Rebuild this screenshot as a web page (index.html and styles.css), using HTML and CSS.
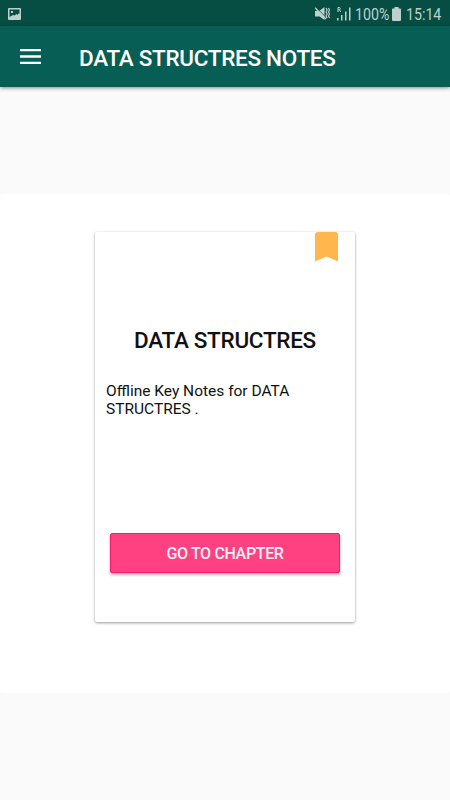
FILE: index.html
```html
<!DOCTYPE html>
<html lang="en">
<head>
    <meta charset="UTF-8">
    <meta name="viewport" content="width=device-width, initial-scale=1.0">
    <title>Data Structres Notes</title>
    <link rel="stylesheet" href="styles.css">
</head>
<body>
    <div class="status">
        <svg class="photo" width="13" height="12" viewBox="0 0 13 12">
            <rect width="13" height="12" rx="1" fill="#bdd0cd"/>
            <path d="M1.500 1.500h10v4.500l-1-.5-1 1.500-1-1-2 1.500-1.500-.5-3.500 2z" fill="#064d43"/>
            <rect x="3" y="3" width="2" height="2" fill="#bdd0cd"/>
        </svg>
        <svg class="mute" width="15" height="14" viewBox="0 0 15 14" fill="#bdd0cd">
            <path d="M0 4h4l5.500-4v13L4.500 9.500H0z"/>
            <path d="M1 .5L12 11.500" stroke="#064d43" stroke-width="1"/>
            <path d="M0 .8L11 12" stroke="#bdd0cd" stroke-width="1.400"/>
            <path d="M11 1l1.200 2-1.200 2 1.200 2-1.200 2 1.200 2M13.500 1l1 2-1 2 1 2-1 2 1 2" fill="none" stroke="#bdd0cd" stroke-width="1.200"/>
        </svg>
        <svg class="signal" width="14" height="14" viewBox="0 0 14 14" fill="#bdd0cd">
            <path d="M1 5V.5h1.700q1.300 1.200 0 2.300H1M2.300 2.800L3.800 5" fill="none" stroke="#bdd0cd"/>
            <path d="M0 11h1.500v2.500H0zM4 8h1.500v5.500H4zM8 4.500h1.500v9H8zM12 .5h1.500v13H12z"/>
        </svg>
        <span class="percent">100%</span>
        <svg class="battery" width="9" height="14" viewBox="0 0 9 14">
            <path d="M2.500 0h4v1.500H8q1 0 1 1V13q0 1-1 1H1q-1 0-1-1V2.500q0-1 1-1h1.500z" fill="#bdd0cd"/>
        </svg>
        <span class="time">15:14</span>
    </div>
    <header>
        <svg class="menu" width="21" height="15" viewBox="0 0 21 15">
            <path d="M0 1.200h21M0 7.500h21M0 13.800h21" stroke="#fff" stroke-width="2.300"/>
        </svg>
        <h1>DATA STRUCTRES NOTES</h1>
    </header>
    <main>
        <div class="card">
            <svg class="bookmark" width="23" height="30" viewBox="0 0 23 30">
                <path d="M3 0h17q3 0 3 3v26.500L11.500 24.500 0 29.500V3q0-3 3-3z" fill="#ffb74d"/>
            </svg>
            <h2>DATA STRUCTRES</h2>
            <p>Offline Key Notes for DATA STRUCTRES .</p>
            <button type="button">GO TO CHAPTER</button>
        </div>
    </main>
</body>
</html>
```
FILE: styles.css
```css
*{
    box-sizing: border-box;
}
body{
    margin: 0;
    height: 800px;
    overflow: hidden;
    background: #fafafa;
    font-family: Roboto, sans-serif;
}
.status{
    display: flex;
    align-items: center;
    height: 26px;
    padding: 2px 9px 0 8px;
    background: #064d43;
    color: #bdd0cd;
    font-size: 16.500px;
}
.photo{
    margin-right: auto;
}
.mute{
    margin-right: 7px;
}
.signal{
    margin-right: 4px;
}
/* narrow digits, like the phone's clock */
.percent, .time{
    white-space: nowrap;
    transform: scaleX(0.86);
    transform-origin: left;
}
.percent{
    width: 34px;
}
.battery{
    margin: 0 5px 0 3px;
}
.time{
    width: 35px;
}
header{
    display: flex;
    align-items: center;
    height: 61px;
    padding: 0 20px;
    background: #075e54;
    box-shadow: 0 1px 4px rgba(0, 0, 0, 0.45);
}
h1{
    margin: 2px 0 0 38px;
    color: white;
    font-size: 22.500px;
    font-weight: 500;
    letter-spacing: -0.3px;
    white-space: nowrap;
}
main{
    height: 499px;
    margin-top: 107px;
    padding: 38px 95px;
    border-radius: 3px;
    background: white;
}
.card{
    display: flex;
    flex-direction: column;
    height: 390px;
    padding: 0 15px;
    border-radius: 2px;
    background: white;
    box-shadow: 0 1px 3px rgba(0, 0, 0, 0.4);
}
.bookmark{
    align-self: flex-end;
    margin-right: 2px;
}
h2{
    margin: 65px 0 0;
    color: #111;
    font-size: 22.500px;
    font-weight: 500;
    letter-spacing: -0.3px;
    line-height: 26px;
    text-align: center;
    white-space: nowrap;
}
p{
    margin: 29px -4px 0;
    color: #111;
    font-size: 15.500px;
    line-height: 18px;
}
button{
    height: 40px;
    margin-top: 115px;
    padding: 1px 0 0;
    border: 1px solid #f91b70;
    border-radius: 2px;
    background: #ff4081;
    box-shadow: 0 2px 3px rgba(0, 0, 0, 0.3);
    color: #fff0f5;
    font-family: Roboto, sans-serif;
    font-size: 16px;
    font-weight: 500;
    letter-spacing: -0.35px;
}
```
